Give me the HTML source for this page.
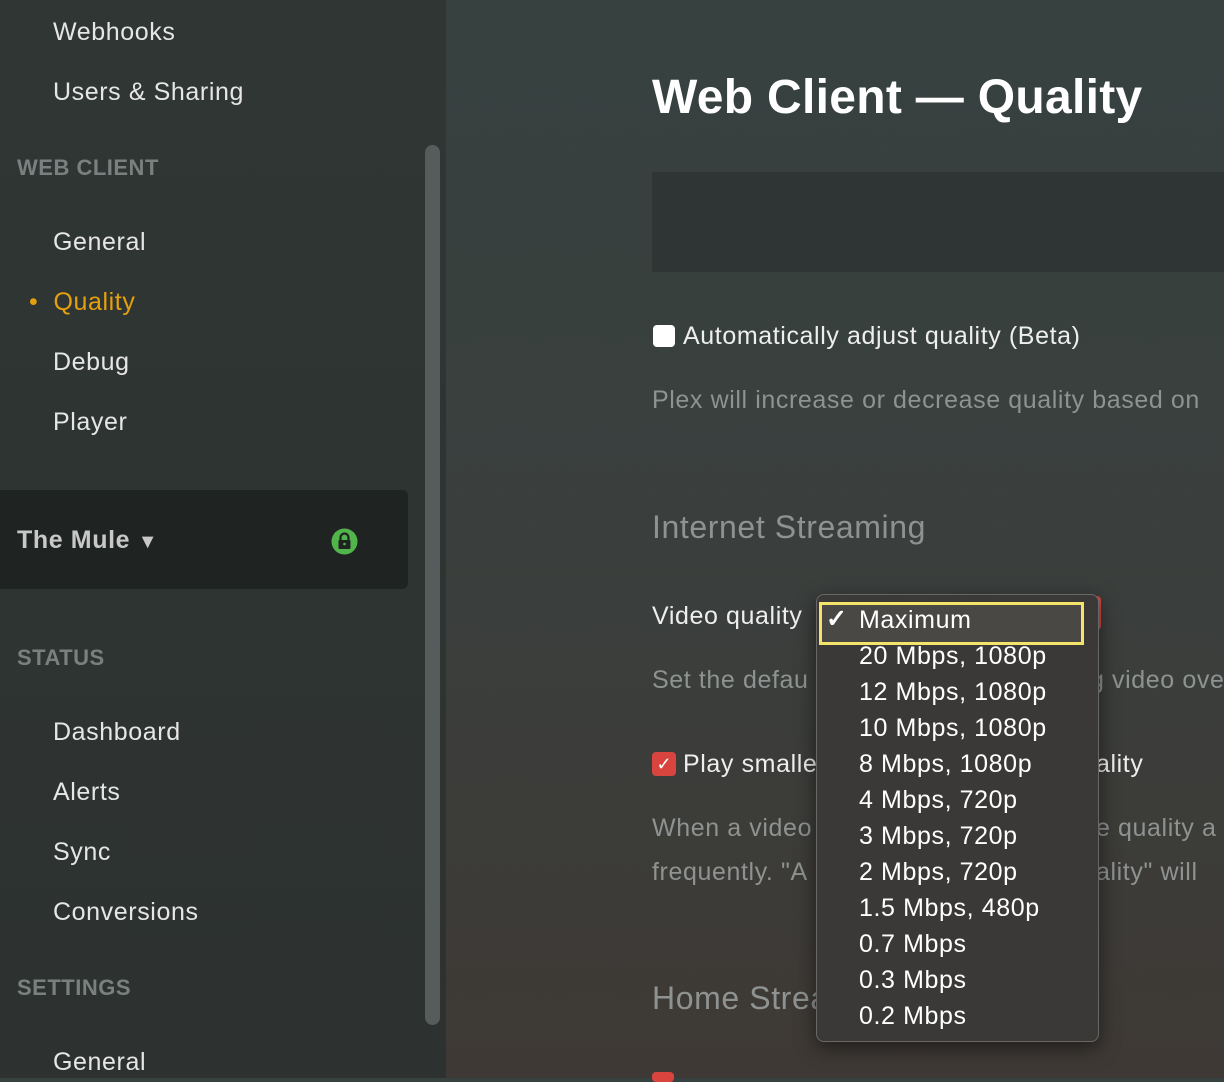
<!DOCTYPE html>
<html><head><meta charset="utf-8"><style>
*{margin:0;padding:0;box-sizing:border-box}
body{width:1224px;height:1078px;overflow:hidden;font-family:"Liberation Sans",sans-serif;background:linear-gradient(180deg,#364140 0%,#3a3f3d 50%,#3e3935 100%);position:relative;color:#eee}
#side{position:absolute;left:0;top:0;width:446px;height:1078px;background:linear-gradient(180deg,#2f3634,#2d3230)}
.a{position:absolute;font-size:25px;color:#e6e6e6;white-space:nowrap;letter-spacing:.6px}
.h{position:absolute;left:17px;font-size:22px;font-weight:bold;color:#7a807f;letter-spacing:.5px}
.m{position:absolute;font-size:25px;white-space:nowrap;letter-spacing:.6px}
</style></head><body>
<div id="side">
<div class="a" style="left:53px;top:18px">Webhooks</div>
<div class="a" style="left:53px;top:78px">Users &amp; Sharing</div>
<div class="h" style="top:155px">WEB CLIENT</div>
<div class="a" style="left:53px;top:228px">General</div>
<div class="a" style="left:29px;top:288px;color:#e5a00d">•&nbsp;&nbsp;Quality</div>
<div class="a" style="left:53px;top:348px">Debug</div>
<div class="a" style="left:53px;top:408px">Player</div>
<div style="position:absolute;left:0;top:490px;width:408px;height:99px;background:#1f2423;border-radius:0 6px 6px 0"></div>
<div class="a" style="left:17px;top:526px;font-weight:bold;color:#c8c8c8">The Mule <span style="font-size:20px">▼</span></div>
<svg style="position:absolute;left:331px;top:528px" width="27" height="27" viewBox="0 0 27 27"><circle cx="13.5" cy="13.5" r="13" fill="#52b54b"/><rect x="7.5" y="12" width="12" height="9" rx="1" fill="#1f2423"/><path d="M9.5 12V9.5a4 4 0 0 1 8 0V12" stroke="#1f2423" stroke-width="2.2" fill="none"/><circle cx="13.5" cy="16" r="1.3" fill="#52b54b"/></svg>
<div class="h" style="top:645px">STATUS</div>
<div class="a" style="left:53px;top:718px">Dashboard</div>
<div class="a" style="left:53px;top:778px">Alerts</div>
<div class="a" style="left:53px;top:838px">Sync</div>
<div class="a" style="left:53px;top:898px">Conversions</div>
<div class="h" style="top:975px">SETTINGS</div>
<div class="a" style="left:53px;top:1048px">General</div>
<div style="position:absolute;left:425px;top:145px;width:15px;height:880px;border-radius:8px;background:#555c5b"></div>
</div>
<div class="m" style="left:652px;top:70px;font-size:48px;font-weight:bold;color:#fff;letter-spacing:.3px">Web Client — Quality</div>
<div style="position:absolute;left:652px;top:172px;width:572px;height:100px;background:#2e3534"></div>
<div style="position:absolute;left:653px;top:325px;width:22px;height:22px;border-radius:4px;background:#fff"></div>
<div class="m" style="left:683px;top:322px">Automatically adjust quality (Beta)</div>
<div class="m" style="left:652px;top:386px;color:#8e9392">Plex will increase or decrease quality based on</div>
<div class="m" style="left:652px;top:509px;font-size:32px;color:#8e9392">Internet Streaming</div>
<div class="m" style="left:652px;top:602px">Video quality</div>
<div class="m" style="left:652px;top:666px;color:#8e9392">Set the defau</div>
<div class="m" style="left:1090px;top:666px;color:#8e9392">g video ove</div>
<div style="position:absolute;left:652px;top:752px;width:24px;height:24px;border-radius:4px;background:#d9453e;color:#fff;font-size:18px;text-align:center;line-height:24px">✓</div>
<div class="m" style="left:683px;top:750px">Play smalle</div>
<div class="m" style="left:1096px;top:750px">ality</div>
<div class="m" style="left:652px;top:814px;color:#8e9392">When a video</div>
<div class="m" style="left:1096px;top:814px;color:#8e9392">e quality a</div>
<div class="m" style="left:652px;top:858px;color:#8e9392">frequently. "A</div>
<div class="m" style="left:1096px;top:858px;color:#8e9392">ality" will</div>
<div class="m" style="left:652px;top:980px;font-size:32px;color:#8e9392">Home Strea</div>
<div style="position:absolute;left:652px;top:1072px;width:22px;height:10px;border-radius:4px;background:#d9453e"></div>
<div style="position:absolute;left:1085px;top:596px;width:16px;height:34px;background:#d9453e;border-radius:4px"></div>
<div style="position:absolute;left:816px;top:594px;width:283px;height:448px;background:#3a3937;border:1px solid #6a6866;border-radius:8px;box-shadow:0 6px 20px rgba(0,0,0,.5)"></div>
<div class="m" style="left:859px;top:642px;color:#fff">20 Mbps, 1080p</div>
<div style="position:absolute;left:819px;top:602px;width:265px;height:43px;border:3px solid #f4e46a;background:#4a4845"></div>
<div class="m" style="left:826px;top:604px;font-weight:bold;color:#fff">✓</div>
<div class="m" style="left:859px;top:606px;color:#fff">Maximum</div>
<div class="m" style="left:859px;top:678px;color:#fff">12 Mbps, 1080p</div>
<div class="m" style="left:859px;top:714px;color:#fff">10 Mbps, 1080p</div>
<div class="m" style="left:859px;top:750px;color:#fff">8 Mbps, 1080p</div>
<div class="m" style="left:859px;top:786px;color:#fff">4 Mbps, 720p</div>
<div class="m" style="left:859px;top:822px;color:#fff">3 Mbps, 720p</div>
<div class="m" style="left:859px;top:858px;color:#fff">2 Mbps, 720p</div>
<div class="m" style="left:859px;top:894px;color:#fff">1.5 Mbps, 480p</div>
<div class="m" style="left:859px;top:930px;color:#fff">0.7 Mbps</div>
<div class="m" style="left:859px;top:966px;color:#fff">0.3 Mbps</div>
<div class="m" style="left:859px;top:1002px;color:#fff">0.2 Mbps</div>
</body></html>
